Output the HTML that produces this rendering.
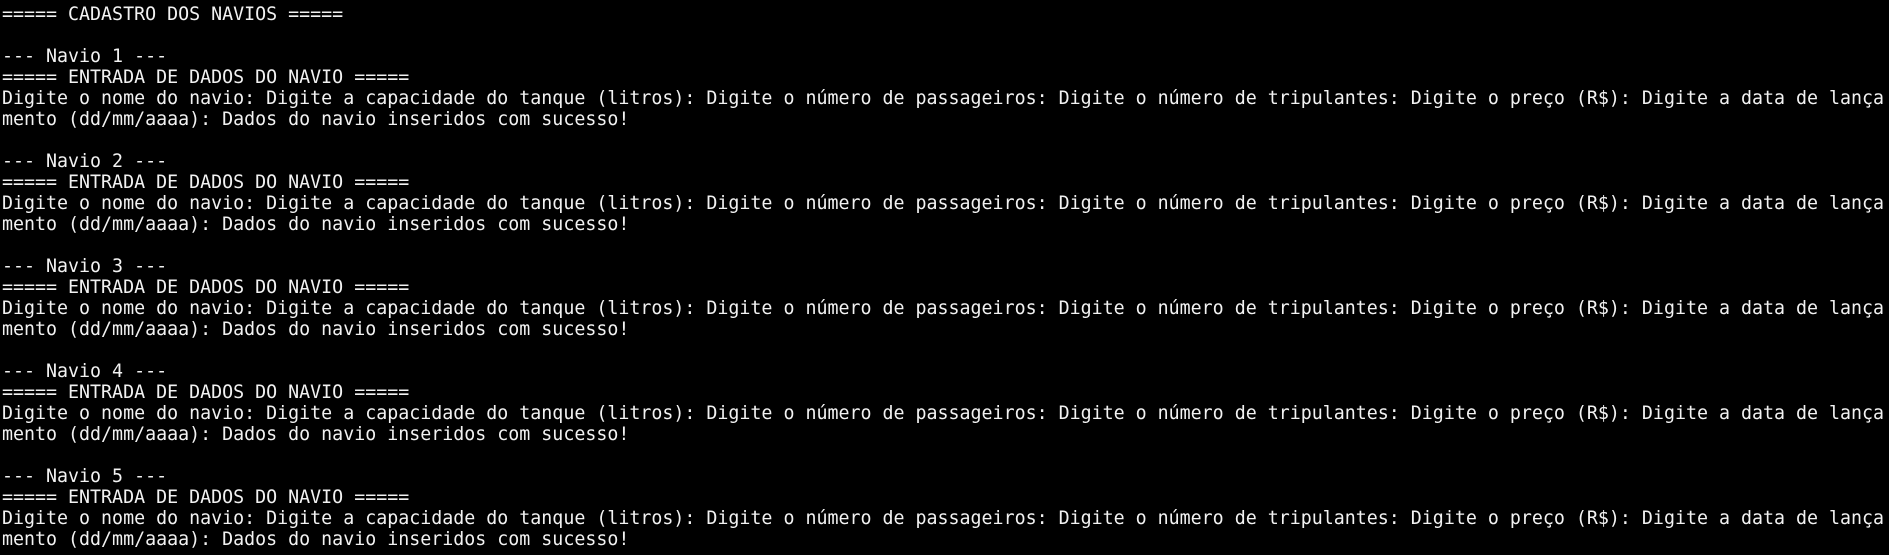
<!DOCTYPE html>
<html><head><meta charset="utf-8"><style>
html,body{margin:0;padding:0;background:#000;width:1889px;height:555px;overflow:hidden}
pre{margin:0;padding:4px 0 0 2px;font-family:"DejaVu Sans Mono","Liberation Mono",monospace;font-size:18.3px;line-height:21px;color:#f2f2f2;white-space:pre}
</style></head><body><pre>===== CADASTRO DOS NAVIOS =====

--- Navio 1 ---
===== ENTRADA DE DADOS DO NAVIO =====
Digite o nome do navio: Digite a capacidade do tanque (litros): Digite o número de passageiros: Digite o número de tripulantes: Digite o preço (R$): Digite a data de lança
mento (dd/mm/aaaa): Dados do navio inseridos com sucesso!

--- Navio 2 ---
===== ENTRADA DE DADOS DO NAVIO =====
Digite o nome do navio: Digite a capacidade do tanque (litros): Digite o número de passageiros: Digite o número de tripulantes: Digite o preço (R$): Digite a data de lança
mento (dd/mm/aaaa): Dados do navio inseridos com sucesso!

--- Navio 3 ---
===== ENTRADA DE DADOS DO NAVIO =====
Digite o nome do navio: Digite a capacidade do tanque (litros): Digite o número de passageiros: Digite o número de tripulantes: Digite o preço (R$): Digite a data de lança
mento (dd/mm/aaaa): Dados do navio inseridos com sucesso!

--- Navio 4 ---
===== ENTRADA DE DADOS DO NAVIO =====
Digite o nome do navio: Digite a capacidade do tanque (litros): Digite o número de passageiros: Digite o número de tripulantes: Digite o preço (R$): Digite a data de lança
mento (dd/mm/aaaa): Dados do navio inseridos com sucesso!

--- Navio 5 ---
===== ENTRADA DE DADOS DO NAVIO =====
Digite o nome do navio: Digite a capacidade do tanque (litros): Digite o número de passageiros: Digite o número de tripulantes: Digite o preço (R$): Digite a data de lança
mento (dd/mm/aaaa): Dados do navio inseridos com sucesso!</pre></body></html>
